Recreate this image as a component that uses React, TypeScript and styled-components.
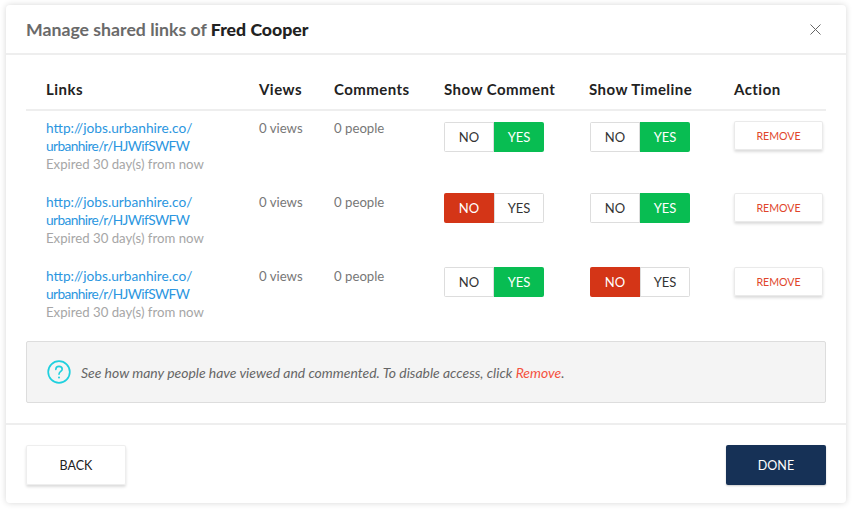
import React from 'react';
import styled, {createGlobalStyle} from 'styled-components';

const GlobalStyle = createGlobalStyle`
    html, body {
        margin: 0;
        padding: 0;
        background: #fff;
    }
    body {
        font-family: "Lato", "Noto Sans", sans-serif;
        color: #222;
    }
`;

type LinkRow = {
    id: number,
    comment: boolean,
    timeline: boolean
}

const rows: LinkRow[] = [
    {id: 1, comment: true, timeline: true},
    {id: 2, comment: false, timeline: true},
    {id: 3, comment: true, timeline: false}
];

const Toggle: React.FC<{value: boolean}> = ({value}) => (
    <ToggleBox>
        <ToggleHalf $active={!value} $color="#d43517">NO</ToggleHalf>
        <ToggleHalf $active={value} $color="#08bd52">YES</ToggleHalf>
    </ToggleBox>
);

const App: React.FC = () => {
    return (
        <>
            <GlobalStyle />
            <Page>
                <Card>
                    <Header>
                        <Title>Manage shared links of <strong>Fred Cooper</strong></Title>
                        <CloseIcon width="11" height="11" viewBox="0 0 11 11">
                            <path d="M.5 .5 L10.5 10.5 M10.5 .5 L.5 10.5" stroke="#666" strokeWidth="1" fill="none" />
                        </CloseIcon>
                    </Header>
                    <Body>
                        <HeadRow>
                            <span>Links</span>
                            <span>Views</span>
                            <span>Comments</span>
                            <span>Show Comment</span>
                            <span>Show Timeline</span>
                            <span>Action</span>
                        </HeadRow>
                        {rows.map(r => (
                            <Row key={r.id}>
                                <LinkCell>
                                    <LinkText>http://jobs.urbanhire.co/<br /><LinkPath>urbanhire/r/HJWifSWFW</LinkPath></LinkText>
                                    <Expiry>Expired 30 day(s) from now</Expiry>
                                </LinkCell>
                                <Count>0 views</Count>
                                <Count>0 people</Count>
                                <ToggleCell><Toggle value={r.comment} /></ToggleCell>
                                <ToggleCell><Toggle value={r.timeline} /></ToggleCell>
                                <ActionCell><RemoveButton>REMOVE</RemoveButton></ActionCell>
                            </Row>
                        ))}
                        <Hint>
                            <svg width="24" height="24" viewBox="0 0 24 24" fill="none">
                                <circle cx="12" cy="12" r="10.8" stroke="#1fd0de" strokeWidth="1.7" />
                                <path d="M8.8 9.4 C8.8 7.5 10.2 6.4 12 6.4 C13.8 6.4 15.2 7.6 15.2 9.2 C15.2 11.4 12 11.6 12 14.2" stroke="#1fd0de" strokeWidth="1.6" strokeLinecap="round" />
                                <circle cx="12" cy="17.4" r="1" fill="#1fd0de" />
                            </svg>
                            <HintText>See how many people have viewed and commented. To disable access, click <em>Remove</em>.</HintText>
                        </Hint>
                    </Body>
                    <Footer>
                        <BackButton>BACK</BackButton>
                        <DoneButton>DONE</DoneButton>
                    </Footer>
                </Card>
            </Page>
        </>
    )
};

const Page = styled.div`
    width: 852px;
    height: 510px;
    padding: 5px 6px 7px;
    box-sizing: border-box;
`;

const Card = styled.div`
    width: 840px;
    height: 498px;
    background: #fff;
    border-radius: 4px;
    box-shadow: 0 0 6px rgba(0, 0, 0, .16);
    display: flex;
    flex-direction: column;
`;

const Header = styled.div`
    height: 48px;
    border-bottom: 2px solid #eee;
    padding: 0 25px 0 20px;
    display: flex;
    align-items: center;
    justify-content: space-between;
`;

const Title = styled.div`
    font-size: 17.7px;
    font-weight: 700;
    color: #6a6a6a;
    strong {
        color: #222;
    }
`;

const CloseIcon = styled.svg`
    display: block;
`;

const Body = styled.div`
    flex: 1;
    padding: 0 20px;
`;

const columns = "213px 75px 110px 145px 145px 1fr";

const HeadRow = styled.div`
    display: grid;
    grid-template-columns: ${columns};
    height: 56px;
    padding: 14px 0 0 20px;
    align-items: center;
    border-bottom: 2px solid #eee;
    box-sizing: border-box;
    font-size: 15px;
    font-weight: 700;
    letter-spacing: .45px;
    color: #222;
`;

const Row = styled.div`
    display: grid;
    grid-template-columns: ${columns};
    height: 74px;
    padding: 8px 0 0 20px;
    box-sizing: border-box;
`;

const LinkCell = styled.div`
    font-size: 13.7px;
    line-height: 18px;
`;

const LinkText = styled.div`
    color: #2b96e0;
`;

const LinkPath = styled.span`
    letter-spacing: -.6px;
`;

const Expiry = styled.div`
    color: #a6a6a6;
    font-size: 13.2px;
`;

const Count = styled.div`
    font-size: 13.2px;
    line-height: 18px;
    color: #777;
`;

const ToggleCell = styled.div`
    &:nth-child(5) {
        margin-left: 1px;
    }
    ${Row}:nth-child(2) & {
        margin-top: 3px;
    }
`;

const ActionCell = styled.div`
    ${Row}:nth-child(2) & {
        margin-top: 2px;
    }
`;

const ToggleBox = styled.div`
    display: flex;
    width: 100px;
    height: 30px;
    border-radius: 2px;
    overflow: hidden;
`;

const ToggleHalf = styled.div<{$active: boolean, $color: string}>`
    flex: 1;
    display: flex;
    align-items: center;
    justify-content: center;
    font-size: 13px;
    background: ${props => props.$active ? props.$color : "#fff"};
    color: ${props => props.$active ? "#fff" : "#333"};
    box-shadow: ${props => props.$active ? "none" : "inset 0 0 0 1px #ddd"};
`;

const RemoveButton = styled.div`
    width: 89px;
    height: 29px;
    padding-top: 1px;
    box-sizing: border-box;
    display: flex;
    align-items: center;
    justify-content: center;
    background: #fff;
    color: #e0452a;
    font-size: 10.6px;
    border-radius: 2px;
    box-shadow: inset 0 0 0 1px #eaeaea, 0 2px 3px rgba(0, 0, 0, .14);
`;

const Hint = styled.div`
    margin-top: 8px;
    height: 62px;
    box-sizing: border-box;
    background: #f4f4f4;
    border: 1px solid #ddd;
    border-radius: 2px;
    display: flex;
    align-items: center;
    gap: 10px;
    padding-left: 20px;
`;

const HintText = styled.div`
    font-size: 13.95px;
    font-style: italic;
    color: #666;
    em {
        color: #f4523f;
    }
`;

const Footer = styled.div`
    height: 80px;
    box-sizing: border-box;
    border-top: 2px solid #eee;
    padding: 20px 20px 0;
    display: flex;
    justify-content: space-between;
    align-items: flex-start;
`;

const BackButton = styled.div`
    width: 100px;
    height: 40px;
    display: flex;
    align-items: center;
    justify-content: center;
    background: #fff;
    font-size: 12.5px;
    color: #222;
    border-radius: 2px;
    box-shadow: inset 0 0 0 1px #eee, 0 2px 3px rgba(0, 0, 0, .14);
`;

const DoneButton = styled(BackButton)`
    background: #163156;
    color: #fff;
    box-shadow: 0 1px 2px rgba(0, 0, 0, .2);
`;

export default App;
